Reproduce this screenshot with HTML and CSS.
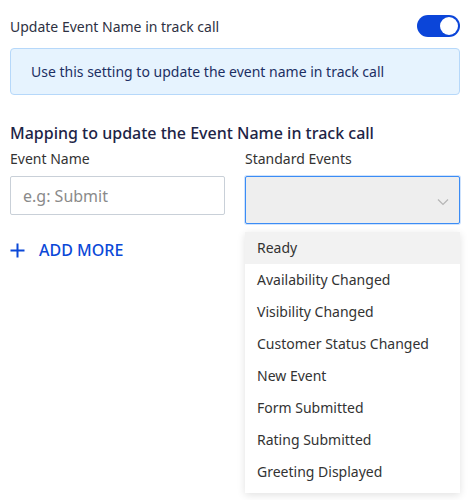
FILE: index.html
```html
<!DOCTYPE html>
<html>
<head>
<meta charset="utf-8">
<link rel="stylesheet" href="styles.css">
</head>
<body>
<div class="page">
  <div class="toggle-row">
    <span class="toggle-label">Update Event Name in track call</span>
    <span class="toggle"><span class="knob"></span></span>
  </div>
  <div class="info">Use this setting to update the event name in track call</div>
  <h2 class="heading">Mapping to update the Event Name in track call</h2>
  <div class="grid">
    <div class="field">
      <label class="label">Event Name</label>
      <div class="input">e.g: Submit</div>
    </div>
    <div class="field">
      <label class="label">Standard Events</label>
      <div class="select-wrap">
        <div class="select">
          <svg class="chev" width="12" height="8" viewBox="0 0 12 8"><path d="M1 1.5 L6 6.5 L11 1.5" fill="none" stroke="#b5b5b5" stroke-width="1.2"/></svg>
        </div>
        <ul class="menu">
          <li class="item active">Ready</li>
          <li class="item">Availability Changed</li>
          <li class="item">Visibility Changed</li>
          <li class="item">Customer Status Changed</li>
          <li class="item">New Event</li>
          <li class="item">Form Submitted</li>
          <li class="item">Rating Submitted</li>
          <li class="item">Greeting Displayed</li>
        </ul>
      </div>
    </div>
  </div>
  <div class="add">
    <svg width="15" height="15" viewBox="0 0 15 15"><path d="M7.5 0.5 V14.5 M0.5 7.5 H14.5" stroke="#0b48d8" stroke-width="2"/></svg>
    <span>ADD MORE</span>
  </div>
</div>
</body>
</html>
```
FILE: styles.css
```css
* { box-sizing: border-box; }
html, body { margin: 0; background: #fff; }
body { font-family: "Noto Sans", "Open Sans", sans-serif; color: #333; }
.page { padding: 15px 9px 0 10px; width: 469px; min-height: 500px; }
.toggle-row { display: flex; justify-content: space-between; align-items: center; height: 22px; }
.toggle-label { font-size: 14px; color: #2e3142; }
.toggle { width: 43px; height: 22px; border-radius: 11px; background: #0b45d9; display: flex; align-items: center; justify-content: flex-end; padding-right: 2px; }
.knob { width: 18px; height: 18px; border-radius: 50%; background: #fff; }
.info { margin-top: 11px; height: 47px; border: 1px solid #b6d8fa; background: #e6f3fe; border-radius: 4px; padding-left: 20px; display: flex; align-items: center; font-size: 14px; color: #1c2f63; }
.heading { margin: 27px 0 0; font-size: 16px; font-weight: 500; color: #1d2446; line-height: 22px; }
.grid { display: grid; grid-template-columns: 215px 215px; column-gap: 20px; margin-top: 5px; }
.label { display: block; font-size: 14px; color: #333; line-height: 20px; margin-bottom: 7px; }
.input { height: 39px; border: 1px solid #c9d0d8; border-radius: 2px; padding-left: 12px; display: flex; align-items: center; font-size: 16px; color: #8a8a8a; }
.select-wrap { position: relative; }
.select { height: 48px; border: 1px solid #3b8cf5; border-radius: 2px; background: #eeeeee; box-shadow: 0 0 0 1px #cfe3fd; position: relative; }
.chev { position: absolute; right: 10px; top: 21px; }
.menu { position: absolute; left: 0; top: 56px; width: 215px; margin: 0; padding: 0 0 5px; list-style: none; background: #fff; box-shadow: 0 2px 8px rgba(0,0,0,0.12); z-index: 2; }
.item { height: 32px; line-height: 32px; padding-left: 12px; font-size: 14px; color: #333; }
.item.active { background: #f2f2f2; }
.add { display: flex; align-items: center; gap: 14px; margin-top: 15px; color: #0b48d8; font-size: 16px; font-weight: 500; }
.add svg { display: block; }
```
